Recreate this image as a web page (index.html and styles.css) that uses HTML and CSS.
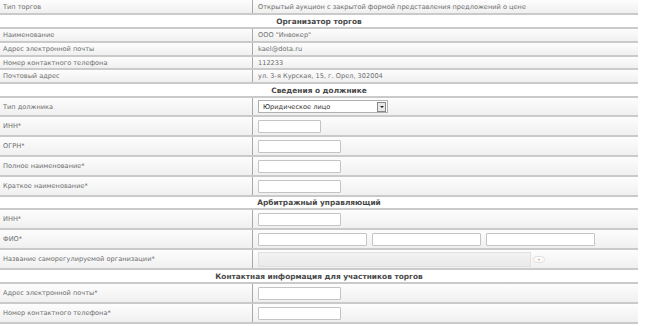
FILE: index.html
```html
<!DOCTYPE html>
<html lang="ru">
<head>
    <meta charset="UTF-8">
    <title>Сведения о торгах</title>
    <link rel="stylesheet" href="styles.css">
</head>
<body>

    <div class="form">
        <div class="row r15">
            <div class="label">Тип торгов</div>
            <div class="value">Открытый аукцион с закрытой формой представления предложений о цене</div>
        </div>

        <div class="row head">Организатор торгов</div>
        <div class="row">
            <div class="label">Наименование</div>
            <div class="value">ООО "Инвокер"</div>
        </div>
        <div class="row">
            <div class="label">Адрес электронной почты</div>
            <div class="value">kael@dota.ru</div>
        </div>
        <div class="row r13">
            <div class="label">Номер контактного телефона</div>
            <div class="value">112233</div>
        </div>
        <div class="row">
            <div class="label">Почтовый адрес</div>
            <div class="value">ул. 3-я Курская, 15, г. Орел, 302004</div>
        </div>

        <div class="row head">Сведения о должнике</div>
        <div class="row r19">
            <div class="label">Тип должника</div>
            <div class="value">
                <div class="select">
                    <span class="select-text">Юридическое лицо</span>
                    <span class="select-btn"></span>
                </div>
            </div>
        </div>
        <div class="row field">
            <div class="label">ИНН*</div>
            <div class="value"><input class="input short" type="text"></div>
        </div>
        <div class="row field">
            <div class="label">ОГРН*</div>
            <div class="value"><input class="input" type="text"></div>
        </div>
        <div class="row field">
            <div class="label">Полное наименование*</div>
            <div class="value"><input class="input" type="text"></div>
        </div>
        <div class="row field">
            <div class="label">Краткое наименование*</div>
            <div class="value"><input class="input" type="text"></div>
        </div>

        <div class="row head r13">Арбитражный управляющий</div>
        <div class="row field">
            <div class="label">ИНН*</div>
            <div class="value"><input class="input" type="text"></div>
        </div>
        <div class="row field">
            <div class="label">ФИО*</div>
            <div class="value fio">
                <input class="input wide" type="text">
                <input class="input wide" type="text">
                <input class="input wide" type="text">
            </div>
        </div>
        <div class="row field">
            <div class="label">Название саморегулируемой организации*</div>
            <div class="value">
                <div class="combo"></div>
                <span class="combo-btn"></span>
            </div>
        </div>

        <div class="row head">Контактная информация для участников торгов</div>
        <div class="row field">
            <div class="label">Адрес электронной почты*</div>
            <div class="value"><input class="input" type="text"></div>
        </div>
        <div class="row field">
            <div class="label">Номер контактного телефона*</div>
            <div class="value"><input class="input" type="text"></div>
        </div>
    </div>

</body>
</html>
```

FILE: styles.css
```css
body {
    margin: 0;
    background-color: #fff;
    font-family: "DejaVu Sans", Verdana, sans-serif;
    font-size: 6.6px;
    color: #6e6e6e;
}
.form {
    width: 638px;
}
.row {
    display: flex;
    height: 12px;
    border-bottom: 2px solid #cacaca;
    background: linear-gradient(to bottom, #fdfdfd, #f0f0f0);
}
.r15 {
    height: 13px;
}
.r13 {
    height: 11px;
}
.r19 {
    height: 17px;
}
.field {
    height: 18px;
}
.head {
    justify-content: center;
    align-items: center;
    background: #fff;
    font-weight: bold;
    font-size: 7.4px;
    color: #484848;
}
.label {
    width: 249px;
    padding-left: 3px;
    border-right: 1px solid #a8a8a8;
    display: flex;
    align-items: center;
    white-space: nowrap;
}
.value {
    flex: 1;
    padding-left: 5px;
    display: flex;
    align-items: center;
    white-space: nowrap;
}
.input {
    box-sizing: border-box;
    width: 83px;
    height: 13px;
    margin: 0;
    padding: 0;
    border: 1px solid #c4c4c4;
    border-radius: 1px;
    background: #fff;
}
.input.short {
    width: 63px;
}
.fio {
    gap: 5px;
}
.input.wide {
    width: 109px;
}
.select {
    box-sizing: border-box;
    width: 130px;
    height: 13px;
    border: 1px solid #b0b0b0;
    background: #fff;
    display: flex;
    align-items: center;
    justify-content: space-between;
    padding-left: 4px;
    color: #333;
}
.select-btn {
    box-sizing: border-box;
    width: 9px;
    height: 10px;
    margin-right: 1px;
    border: 1px solid #888;
    background: #e8e8e8;
    position: relative;
}
.select-btn::after {
    content: "";
    position: absolute;
    left: 2px;
    top: 3px;
    border-left: 2px solid transparent;
    border-right: 2px solid transparent;
    border-top: 2px solid #222;
}
.combo {
    box-sizing: border-box;
    width: 273px;
    height: 15px;
    border: 1px solid #e0e0e0;
    background: linear-gradient(to bottom, #f2f2f2, #eaeaea);
}
.combo-btn {
    box-sizing: border-box;
    width: 12px;
    height: 7px;
    margin-left: 2px;
    border: 1px solid #e0e0e0;
    border-radius: 4px;
    background: #fafafa;
    position: relative;
}
.combo-btn::after {
    content: "";
    position: absolute;
    left: 4px;
    top: 2px;
    border-left: 1.5px solid transparent;
    border-right: 1.5px solid transparent;
    border-top: 2px solid #d9a070;
}
```
